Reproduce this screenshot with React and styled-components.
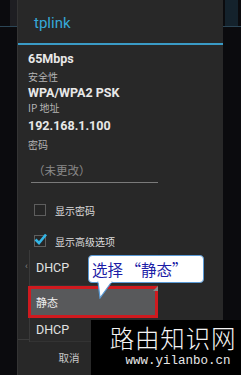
import React from 'react';
import styled, { createGlobalStyle } from 'styled-components';

const Global = createGlobalStyle`
  html, body { margin: 0; padding: 0; background: #0c0c0f; }
  body { font-family: Roboto, "Noto Sans CJK SC", sans-serif; }
`;

const Screen = styled.div`
  position: relative;
  width: 241px;
  height: 375px;
  overflow: hidden;
  background: #0b0b0e;
  display: flex;
`;

const SideStrip = styled.div`
  width: ${p => p.w}px;
  display: flex;
  flex-direction: column;
  flex-shrink: 0;
`;

const SideTop = styled.div`
  height: 26px;
  margin: ${p => p.right ? '0 4px 0 2px' : '0 0 0 10px'};
  background: ${p => p.right ? '#14222c' : '#1e1e22'};
`;

const SideLine = styled.div`
  height: 1px;
  background: #2c4656;
`;

const Dialog = styled.div`
  width: 205px;
  flex-shrink: 0;
  background: #282828;
  display: flex;
  flex-direction: column;
  border-left: 1px solid #343434;
`;

const Header = styled.div`
  height: 43px;
  display: flex;
  align-items: center;
  padding: 2px 0 0 16px;
  box-sizing: border-box;
  color: #36a9d8;
  font-size: 15px;
`;

const BlueLine = styled.div`
  height: 2px;
  background: #3a9bc6;
`;

const Body = styled.div`
  padding: 4px 0 0 10px;
  display: flex;
  flex-direction: column;
  flex: 1;
`;

const Value = styled.div`
  height: ${p => p.h}px;
  line-height: ${p => p.h}px;
  color: #e8e8e8;
  font-weight: bold;
  font-size: 12.5px;
`;

const Label = styled.div`
  height: ${p => p.h}px;
  line-height: ${p => p.h}px;
  color: #b4b4b4;
  font-size: 10px;
  font-family: "Noto Sans CJK SC", sans-serif;
`;

const PwdField = styled.div`
  margin: 4px 0 0 3px;
  width: 127px;
  height: 24px;
  box-sizing: border-box;
  border-bottom: 1px solid #7a7a7a;
  color: #8a8a8a;
  font-size: 11.5px;
  line-height: 22px;
  padding-left: 2px;
  font-family: "Noto Sans CJK SC", sans-serif;
`;

const CheckRow = styled.div`
  display: flex;
  align-items: center;
  gap: 9px;
  height: 30px;
  padding-left: 6px;
  margin-top: ${p => p.mt || 0}px;
`;

const Box = styled.div`
  width: 10px;
  height: 10px;
  border: 1px solid #5e5e5e;
  position: relative;
  background: #262626;
`;

const CheckText = styled.span`
  color: #dcdcdc;
  font-size: 10px;
  font-family: "Noto Sans CJK SC", sans-serif;
`;

const SpinnerRow = styled.div`
  height: 50px;
`;

const ButtonBar = styled.div`
  height: 35px;
  border-top: 1px solid #3c3c3c;
  display: flex;
`;

const BarButton = styled.div`
  flex: 1;
  display: flex;
  align-items: center;
  justify-content: center;
  color: #c8c8c8;
  font-size: 10.5px;
  font-family: "Noto Sans CJK SC", sans-serif;
  & + & { border-left: 1px solid #3c3c3c; }
`;

const Popup = styled.div`
  position: absolute;
  left: 29px;
  top: 250px;
  width: 128px;
  background: #2a2a2a;
  border-left: 1px solid #3a3a3a;
  display: flex;
  flex-direction: column;
`;

const Item = styled.div`
  height: ${p => p.h}px;
  display: flex;
  align-items: center;
  padding-left: 6px;
  color: #e2e2e2;
  font-size: 12.5px;
  font-family: Roboto, "Noto Sans CJK SC", sans-serif;
  border-bottom: 1px solid #333;
`;

const Selected = styled.div`
  height: 32px;
  margin-left: -2px;
  border: 3px solid #cf1a1f;
  box-sizing: border-box;
  background: #58595b;
  display: flex;
  align-items: center;
  padding-left: 5px;
  color: #f0f0f0;
  font-size: 11px;
  font-family: "Noto Sans CJK SC", sans-serif;
`;

const LeftMark = styled.span`
  position: absolute;
  left: 25px;
  top: 261px;
  color: #888;
  font-size: 9px;
`;

const Corner = styled.div`
  position: absolute;
  left: 153px;
  top: 286px;
  width: 0;
  height: 0;
  border-left: 5px solid transparent;
  border-bottom: 5px solid #8a8a8a;
`;

const Bubble = styled.div`
  position: absolute;
  left: 88px;
  top: 255px;
  width: 116px;
  height: 28px;
  box-sizing: border-box;
  background: #fff;
  border: 1.5px solid #5a9ad6;
  border-radius: 4px;
  color: #1c1ca6;
  font-size: 15.5px;
  line-height: 25px;
  padding-left: 3px;
  font-family: "Noto Sans CJK SC", sans-serif;
  white-space: nowrap;
  display: flex;
  align-items: center;
`;

const Quote = styled.span`
  display: inline-block;
  width: ${p => p.w}px;
  text-align: ${p => p.align};
`;

const Tail = styled.svg`
  position: absolute;
  left: 96px;
  top: 281px;
`;

const Watermark = styled.div`
  position: absolute;
  left: 91px;
  top: 320px;
  width: 150px;
  height: 55px;
  background: #000;
  display: flex;
  flex-direction: column;
  align-items: center;
`;

const MarkTitle = styled.div`
  color: #f4f4f4;
  font-size: 24.5px;
  line-height: 30px;
  margin-top: 3px;
  letter-spacing: 0.8px;
  font-family: "Noto Sans CJK SC", sans-serif;
  font-weight: 300;
  padding-left: 14px;
`;

const MarkUrl = styled.div`
  color: #e8e8e8;
  font-size: 12.5px;
  line-height: 12px;
  margin-top: 2px;
  font-family: "Liberation Mono", monospace;
  padding-left: 24px;
`;

export default function App() {
  return (
    <Screen>
      <Global />
      <SideStrip w={17}>
        <SideTop />
        <SideLine />
      </SideStrip>
      <Dialog>
        <Header>tplink</Header>
        <BlueLine />
        <Body>
          <Value h={20}>65Mbps</Value>
          <Label h={16}>安全性</Label>
          <Value h={15}>WPA/WPA2 PSK</Value>
          <Label h={16}>IP 地址</Label>
          <Value h={19}>192.168.1.100</Value>
          <Label h={20}>密码</Label>
          <PwdField>（未更改）</PwdField>
          <CheckRow mt={12}>
            <Box />
            <CheckText>显示密码</CheckText>
          </CheckRow>
          <CheckRow mt={1}>
            <Box>
              <svg width="13" height="12" viewBox="0 0 13 12" style={{ position: 'absolute', left: -1, top: -3 }}>
                <path d="M1.5 6.5 L5 10 L12 1.5" fill="none" stroke="#33b5e5" strokeWidth="2.6" />
              </svg>
            </Box>
            <CheckText>显示高级选项</CheckText>
          </CheckRow>
          <SpinnerRow />
        </Body>
        <ButtonBar>
          <BarButton>取消</BarButton>
          <BarButton />
        </ButtonBar>
      </Dialog>
      <SideStrip w={19}>
        <SideTop right />
        <SideLine />
      </SideStrip>

      <LeftMark>‹</LeftMark>
      <Popup>
        <Item h={35}>DHCP</Item>
        <Selected>静态</Selected>
        <Item h={23}>DHCP</Item>
      </Popup>
      <Corner />
      <Bubble>
        选择<Quote w={18} align="right">“</Quote>静态<Quote w={12} align="right">”</Quote>
      </Bubble>
      <Tail width="20" height="18" viewBox="0 0 20 18">
        <path d="M2 0.5 L4 17 L16 0.5" fill="#fff" stroke="#5a9ad6" strokeWidth="1.2" />
        <rect x="2.5" y="0" width="13" height="2" fill="#fff" />
      </Tail>
      <Watermark>
        <MarkTitle>路由知识网</MarkTitle>
        <MarkUrl>www.yilanbo.cn</MarkUrl>
      </Watermark>
    </Screen>
  );
}
